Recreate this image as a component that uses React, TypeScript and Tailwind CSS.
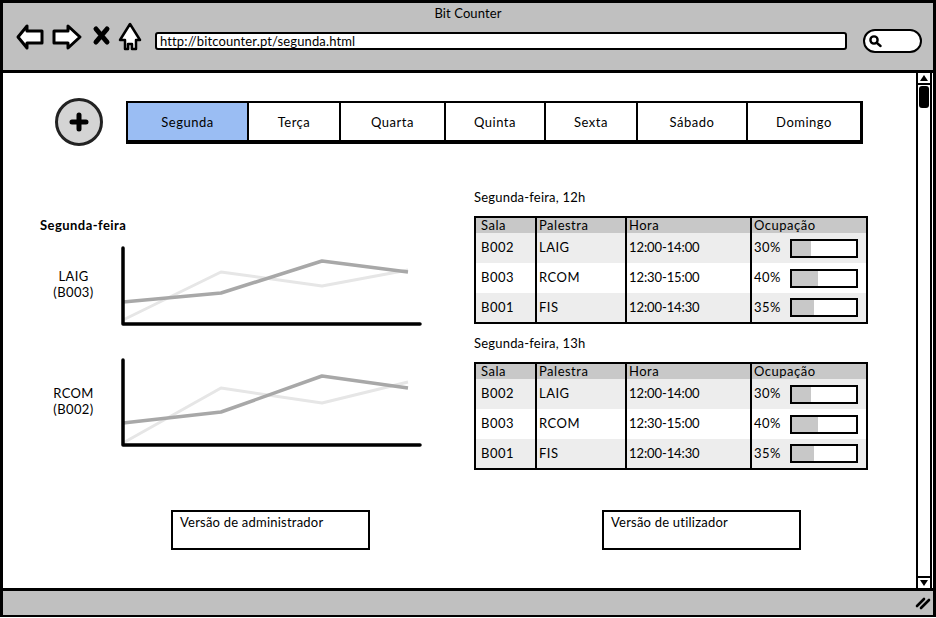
const days = [
  { name: 'Segunda', width: 'w-[119px]', active: true },
  { name: 'Terça', width: 'w-[92px]' },
  { name: 'Quarta', width: 'w-[105px]' },
  { name: 'Quinta', width: 'w-[100px]' },
  { name: 'Sexta', width: 'w-[92px]' },
  { name: 'Sábado', width: 'w-[110px]' },
  { name: 'Domingo', width: 'flex-1' },
]

const rows = [
  { sala: 'B002', palestra: 'LAIG', hora: '12:00-14:00', pct: 30, height: 'h-[30px]' },
  { sala: 'B003', palestra: 'RCOM', hora: '12:30-15:00', pct: 40, height: 'h-[30px]' },
  { sala: 'B001', palestra: 'FIS', hora: '12:00-14:30', pct: 35, height: 'h-[29px]' },
]

function Toolbar() {
  return (
    <div className="h-[70px] shrink-0 bg-[#c0c0c0] border-b-[3px] border-black">
      <p className="pt-[2px] h-[19px] text-center text-[13px] leading-[17px] tracking-[0.1px]">Bit Counter</p>
      <div className="flex items-center pl-[9px] pr-[11px] h-[30px]">
        <svg width="130" height="30" viewBox="0 0 130 30" fill="white" stroke="black" strokeWidth="3" strokeLinejoin="round" className="shrink-0">
          <path d="M6 15 L15 4 L15 9 L30 9 L30 21 L15 21 L15 26 Z" />
          <path d="M68 15 L56 4 L56 9 L42 9 L42 21 L56 21 L56 26 Z" />
          <path d="M84 7 L95 20 M95 7 L84 20" strokeWidth="5" strokeLinecap="round" fill="none" />
          <path d="M118 2 L108 18 L113 18 L113 27 L116 27 L116 22 L120 22 L120 27 L124 27 L124 18 L128 18 Z" strokeWidth="2.5" />
        </svg>
        <div className="ml-[13px] mt-[8px] flex-1 h-[18px] bg-white border-2 border-black rounded-[3px] pl-[3px] text-[13px] leading-[14px] tracking-[0.13px]">
          http://bitcounter.pt/segunda.html
        </div>
        <div className="ml-[16px] mt-[8px] w-[59px] h-[24px] bg-white border-2 border-black rounded-full flex items-center pl-[3px]">
          <svg width="14" height="14" viewBox="0 0 14 14" fill="none" stroke="black" strokeWidth="2.4">
            <circle cx="6" cy="6" r="3.6" />
            <path d="M9 9 L12.5 12" strokeLinecap="round" />
          </svg>
        </div>
      </div>
    </div>
  )
}

function DayTabs() {
  return (
    <div className="flex items-center pl-[52px]">
      <div className="w-[48px] h-[48px] rounded-full bg-[#d4d4d4] border-[3px] border-[#222] flex items-center justify-center">
        <svg width="20" height="20" viewBox="0 0 20 20" stroke="black" strokeWidth="5" strokeLinecap="round">
          <path d="M10 3 V17 M3 10 H17" />
        </svg>
      </div>
      <div className="ml-[23px] w-[737px] h-[43px] flex border-2 border-b-[4px] border-r-[3px] border-black">
        {days.map((day, i) => (
          <div
            key={day.name}
            className={`${day.width} flex items-center justify-center pt-[3px] text-[13px] tracking-[0.5px] ${i > 0 ? 'border-l-2 border-black' : ''} ${day.active ? 'bg-[#9abdf3]' : 'bg-white'}`}
          >
            {day.name}
          </div>
        ))}
      </div>
    </div>
  )
}

function Chart({ h, light, dark }: { h: number; light: string; dark: string }) {
  return (
    <svg width="304" height={h} viewBox={`0 0 304 ${h}`} fill="none" strokeLinejoin="round">
      <polyline points={light} stroke="#e6e6e6" strokeWidth="3" />
      <polyline points={dark} stroke="#a8a8a8" strokeWidth="3.5" />
      <path d={`M3 2 V${h - 2} H300`} stroke="black" strokeWidth="3.5" strokeLinecap="round" />
    </svg>
  )
}

function RoomTable({ title, className }: { title: string; className?: string }) {
  return (
    <div className={className}>
      <p className="text-[13px] leading-[17px] tracking-[0.2px]">{title}</p>
      <div className="mt-[10px] w-[394px] border-2 border-black text-[13px] tracking-[0.5px]">
        <div className="flex h-[15px] bg-[#c8c8c8] leading-[15px]">
          <div className="w-[61px] pl-[5px] border-r-2 border-black">Sala</div>
          <div className="w-[90px] pl-[2px] border-r-2 border-black">Palestra</div>
          <div className="w-[125px] pl-[2px] border-r-2 border-black">Hora</div>
          <div className="flex-1 pl-[2px]">Ocupação</div>
        </div>
        {rows.map((row, i) => (
          <div key={row.sala} className={`flex ${row.height} items-stretch ${i % 2 === 0 ? 'bg-[#ededed]' : 'bg-white'}`}>
            <div className="w-[61px] pl-[5px] border-r-2 border-black flex items-center">{row.sala}</div>
            <div className="w-[90px] pl-[2px] border-r-2 border-black flex items-center">{row.palestra}</div>
            <div className="w-[125px] pl-[2px] border-r-2 border-black flex items-center tracking-[-0.1px]">{row.hora}</div>
            <div className="flex-1 pl-[2px] flex items-center">
              <span className="w-[36px]">{row.pct}%</span>
              <div className="w-[68px] h-[19px] border-2 border-black bg-white">
                <div className="h-full bg-[#c8c8c8]" style={{ width: `${row.pct}%` }} />
              </div>
            </div>
          </div>
        ))}
      </div>
    </div>
  )
}

function Scrollbar() {
  return (
    <div className="w-[16px] shrink-0 flex flex-col border-x-2 border-black ml-auto mr-[1px] bg-white">
      <div className="h-[12px] flex items-center justify-center border-b-2 border-black">
        <div className="w-0 h-0 border-x-[4px] border-x-transparent border-b-[6px] border-b-black" />
      </div>
      <div className="h-[22px] mx-[1px] mt-[1px] bg-black rounded-[3px]" />
      <div className="flex-1" />
      <div className="h-[12px] flex items-center justify-center border-t-2 border-black">
        <div className="w-0 h-0 border-x-[4px] border-x-transparent border-t-[6px] border-t-black" />
      </div>
    </div>
  )
}

export default function App() {
  return (
    <div
      className="w-[936px] h-[618px] bg-white text-black overflow-hidden"
      style={{ fontFamily: '"Lato", "Noto Sans", sans-serif' }}
    >
      <div className="h-[617px] flex flex-col border-t-[3px] border-x-[3px] border-b-2 border-black">
        <Toolbar />
        <div className="flex-1 flex min-h-0">
          <main className="flex-1 pt-[25px]">
            <DayTabs />
            <div className="flex mt-[43px]">
              <div className="w-[471px] pl-[37px] pt-[28px]">
                <p className="text-[13px] leading-[17px] font-bold tracking-[0.45px]">Segunda-feira</p>
                <div className="flex mt-[12px]">
                  <div className="w-[80px] pt-[22px] pr-[13px] text-center text-[13px] leading-[16px] tracking-[0.4px]">
                    LAIG
                    <br />
                    (B003)
                  </div>
                  <Chart h={80} light="3,74 101,26 202,40 288,24" dark="3,56 101,47 202,15 288,26" />
                </div>
                <div className="flex mt-[32px]">
                  <div className="w-[80px] pt-[27px] pr-[13px] text-center text-[13px] leading-[16px] tracking-[0.4px]">
                    RCOM
                    <br />
                    (B002)
                  </div>
                  <Chart h={89} light="3,85 101,30 202,45 288,24" dark="3,65 101,54 202,18 288,30" />
                </div>
              </div>
              <div>
                <RoomTable title="Segunda-feira, 12h" />
                <RoomTable title="Segunda-feira, 13h" className="mt-[11px]" />
              </div>
            </div>
            <div className="flex mt-[40px] pl-[168px] gap-[232px] text-[13px] leading-[17px] tracking-[0.22px]">
              <div className="w-[199px] h-[40px] border-2 border-black pl-[7px] pt-[2px]">Versão de administrador</div>
              <div className="w-[199px] h-[40px] border-2 border-black pl-[7px] pt-[2px]">Versão de utilizador</div>
            </div>
          </main>
          <Scrollbar />
        </div>
        <div className="h-[27px] shrink-0 bg-[#c0c0c0] border-t-[3px] border-black flex items-center justify-end pr-[2px]">
          <svg width="16" height="14" viewBox="0 0 16 14" stroke="black" strokeWidth="2.6" strokeLinecap="round">
            <path d="M2 10 L9 3 M6 12 L14 4" />
          </svg>
        </div>
      </div>
    </div>
  )
}
